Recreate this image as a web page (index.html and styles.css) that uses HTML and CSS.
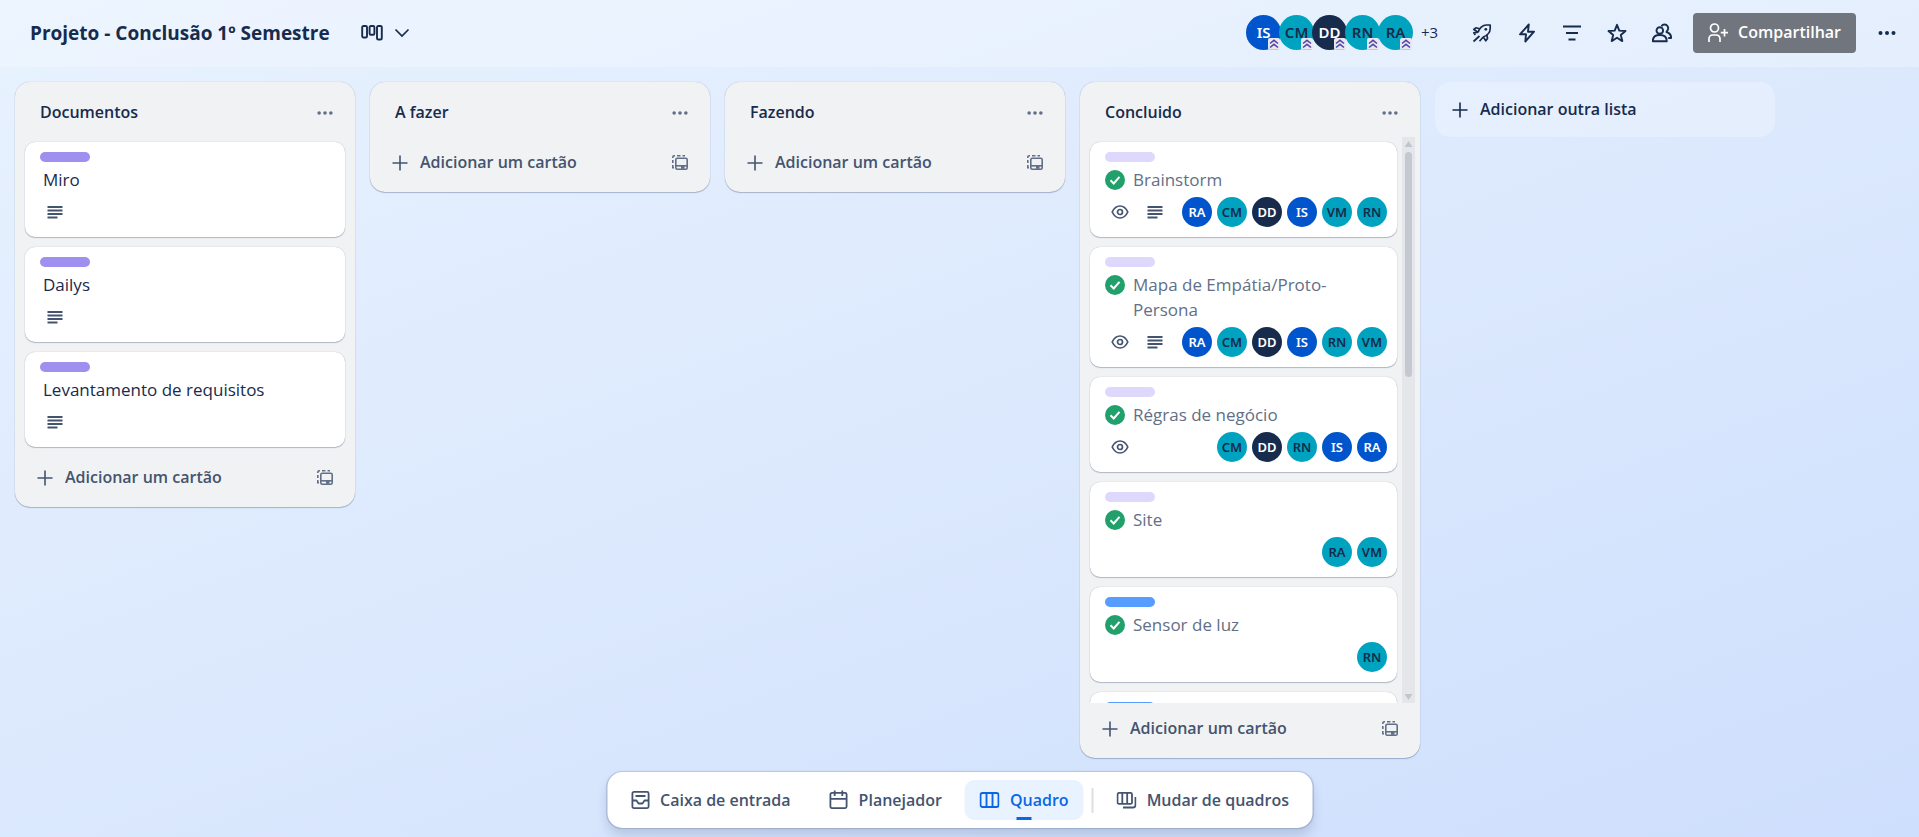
FILE: index.html
```html
<!DOCTYPE html>
<html lang="pt-BR">
<head>
<meta charset="utf-8">
<title>Projeto - Conclusão 1º Semestre</title>
<link rel="stylesheet" href="styles.css">
</head>
<body>
<svg class="sprite" aria-hidden="true">
  <symbol id="plus" viewBox="0 0 20 20"><path d="M10 2.500v15M2.500 10h15" fill="none" stroke="currentColor" stroke-width="1.600"/></symbol>
  <symbol id="dots" viewBox="0 0 20 20"><g fill="currentColor"><circle cx="3.500" cy="10" r="2"/><circle cx="10" cy="10" r="2"/><circle cx="16.500" cy="10" r="2"/></g></symbol>
  <symbol id="lines" viewBox="0 0 20 20"><path d="M2.500 5h15M2.500 8.500h15M2.500 12h15M2.500 15.500h10" fill="none" stroke="currentColor" stroke-width="1.900"/></symbol>
  <symbol id="eye" viewBox="0 0 20 20"><g fill="none" stroke="currentColor" stroke-width="1.700"><path d="M2.200 10C4.200 5.800 7 4 10 4S15.800 5.800 17.800 10C15.800 14.200 13 16 10 16S4.200 14.200 2.200 10Z"/><circle cx="10" cy="10" r="2.500"/></g></symbol>
  <symbol id="check" viewBox="0 0 20 20"><circle cx="10" cy="10" r="10" fill="#22a06b"/><path d="M5.500 10.300l3.200 3.200 5.800-6.700" fill="none" stroke="#fff" stroke-width="2"/></symbol>
  <symbol id="template" viewBox="0 0 20 20"><g fill="none" stroke="currentColor" stroke-width="1.600"><rect x="5.800" y="5.300" width="11.400" height="10.900" rx="1.500"/><path d="M5.500 12.800h12"/><path d="M2.800 5V4.300a1.500 1.500 0 0 1 1.500-1.500H5M7 2.800h3.500M12.500 2.800H15M2.800 7v3M2.800 12v2.800H4"/></g><path d="M11 12.500h3.500v3.300H11z" fill="currentColor"/></symbol>
  <symbol id="chevrons" viewBox="0 0 12 12"><rect width="12" height="12" rx="2" fill="#e8e8ee"/><path d="M1 11.500l1-.5h8l1 .5z" fill="#aaa"/><path d="M2 5.500L6 2.300l4 3.200M2 9.500l4-3.200 4 3.200" fill="none" stroke="#5243aa" stroke-width="1.500"/></symbol>
</svg>

<header class="topbar">
  <h1 class="board-name">Projeto - Conclusão 1º Semestre</h1>
  <button class="view-switch" aria-label="Visualizações">
    <svg width="22" height="20" viewBox="0 0 22 20"><g fill="none" stroke="currentColor" stroke-width="1.900"><rect x="1.200" y="3" width="4.800" height="11.500" rx="1.300"/><rect x="8.600" y="3" width="4.800" height="8.800" rx="1.300"/><rect x="16" y="3" width="4.800" height="13.500" rx="1.300"/></g></svg>
    <svg width="16" height="20" viewBox="0 0 16 20"><path d="M1.500 6.500l6.500 6.500 6.500-6.500" fill="none" stroke="currentColor" stroke-width="1.700"/></svg>
  </button>
  <div class="topbar-right">
    <ul class="members">
      <li class="avatar avatar-lg blue">IS<svg class="admin"><use href="#chevrons"/></svg></li>
      <li class="avatar avatar-lg teal">CM<svg class="admin"><use href="#chevrons"/></svg></li>
      <li class="avatar avatar-lg navy">DD<svg class="admin"><use href="#chevrons"/></svg></li>
      <li class="avatar avatar-lg teal">RN<svg class="admin"><use href="#chevrons"/></svg></li>
      <li class="avatar avatar-lg teal">RA<svg class="admin"><use href="#chevrons"/></svg></li>
    </ul>
    <button class="more-members">+3</button>
    <div class="tools">
      <button class="tool" aria-label="Power-Ups"><svg class="icon" viewBox="0 0 20 20"><g fill="none" stroke="currentColor" stroke-width="1.700" stroke-linejoin="round"><path d="M6.200 9.200C7.200 5.500 10.500 2 14.500 2h3.700v3.500c0 4-3.200 7.300-7 8.500"/><path d="M7.800 5.800L3.800 4.800 1.800 6.500l4.400 2.700M14.800 11.500l.7 4-1.700 2.300-2.600-3.800"/><path d="M6.200 9.200l-4.400.6 1.500 2.200M7.500 13l-6 5.500M11.200 14l-3.700 4.200"/></g><circle cx="13.800" cy="6.300" r="1.400" fill="currentColor"/></svg></button>
      <button class="tool" aria-label="Automação"><svg class="icon" viewBox="0 0 20 20"><path d="M11.800 1.500L3 11.300h6L8.300 18.500 17 8.700h-6z" fill="none" stroke="currentColor" stroke-width="1.900" stroke-linejoin="round"/></svg></button>
      <button class="tool" aria-label="Filtros"><svg class="icon" viewBox="0 0 20 20"><path d="M1 3.500h18M4 10h12M6.500 16.500h7" fill="none" stroke="currentColor" stroke-width="1.900"/></svg></button>
      <button class="tool" aria-label="Favoritar"><svg class="icon" viewBox="0 0 20 20"><path d="M10 1.800l2.300 5.800 6.200.4-4.700 4 1.500 6.100L10 14.800l-5.300 3.300L6.200 12 1.500 8l6.200-.4z" fill="none" stroke="currentColor" stroke-width="1.900" stroke-linejoin="round"/></svg></button>
      <button class="tool" aria-label="Visibilidade"><svg class="icon" viewBox="0 0 20 20"><g fill="none" stroke="currentColor" stroke-width="1.900" stroke-linejoin="round"><circle cx="7.800" cy="7.500" r="3.300"/><path d="M.8 18.200c0-4 2.500-6.200 7-6.200s7 2.200 7 6.200z"/><path d="M9.500 3.200C10.300 1.800 11.300 1.500 12.500 1.500a3.600 3.600 0 0 1 3.300 5.200L14.500 9c3 1 4.700 3 4.700 6h-3"/></g></svg></button>
    </div>
    <button class="share"><svg class="icon" viewBox="0 0 20 20"><g fill="none" stroke="currentColor" stroke-width="1.700"><circle cx="6.500" cy="5" r="4"/><path d="M1 19v-3.500a3.500 3.500 0 0 1 3.500-3.500h4a3.500 3.500 0 0 1 3.500 3.500V19M16.500 6v7.500M12.800 9.700h7.200"/></g></svg><span>Compartilhar</span></button>
    <button class="tool" aria-label="Menu"><svg class="icon" viewBox="0 0 20 20"><use href="#dots"/></svg></button>
  </div>
</header>

<main class="board">
  <section class="list">
    <header class="list-head"><h2>Documentos</h2><button class="list-menu" aria-label="Ações da lista"><svg><use href="#dots"/></svg></button></header>
    <div class="list-body"><ol class="cards">
      <li class="card"><span class="label purple"></span><h3>Miro</h3><div class="badges"><svg><use href="#lines"/></svg></div></li>
      <li class="card"><span class="label purple"></span><h3>Dailys</h3><div class="badges"><svg><use href="#lines"/></svg></div></li>
      <li class="card"><span class="label purple"></span><h3>Levantamento de requisitos</h3><div class="badges"><svg><use href="#lines"/></svg></div></li>
    </ol></div>
    <footer class="list-foot"><button class="add-card"><svg><use href="#plus"/></svg>Adicionar um cartão</button><button class="from-template" aria-label="Criar de modelo"><svg><use href="#template"/></svg></button></footer>
  </section>

  <section class="list">
    <header class="list-head"><h2>A fazer</h2><button class="list-menu" aria-label="Ações da lista"><svg><use href="#dots"/></svg></button></header>
    <footer class="list-foot"><button class="add-card"><svg><use href="#plus"/></svg>Adicionar um cartão</button><button class="from-template" aria-label="Criar de modelo"><svg><use href="#template"/></svg></button></footer>
  </section>

  <section class="list">
    <header class="list-head"><h2>Fazendo</h2><button class="list-menu" aria-label="Ações da lista"><svg><use href="#dots"/></svg></button></header>
    <footer class="list-foot"><button class="add-card"><svg><use href="#plus"/></svg>Adicionar um cartão</button><button class="from-template" aria-label="Criar de modelo"><svg><use href="#template"/></svg></button></footer>
  </section>

  <section class="list">
    <header class="list-head"><h2>Concluido</h2><button class="list-menu" aria-label="Ações da lista"><svg><use href="#dots"/></svg></button></header>
    <div class="list-body scrolling">
      <ol class="cards">
        <li class="card done"><span class="label lilac"></span><div class="card-title"><svg><use href="#check"/></svg><h3>Brainstorm</h3></div>
          <div class="badges"><svg><use href="#eye"/></svg><svg><use href="#lines"/></svg><ul class="people"><li class="avatar blue">RA</li><li class="avatar teal">CM</li><li class="avatar navy">DD</li><li class="avatar blue">IS</li><li class="avatar teal">VM</li><li class="avatar teal">RN</li></ul></div></li>
        <li class="card done"><span class="label lilac"></span><div class="card-title"><svg><use href="#check"/></svg><h3>Mapa de Empátia/Proto-Persona</h3></div>
          <div class="badges"><svg><use href="#eye"/></svg><svg><use href="#lines"/></svg><ul class="people"><li class="avatar blue">RA</li><li class="avatar teal">CM</li><li class="avatar navy">DD</li><li class="avatar blue">IS</li><li class="avatar teal">RN</li><li class="avatar teal">VM</li></ul></div></li>
        <li class="card done"><span class="label lilac"></span><div class="card-title"><svg><use href="#check"/></svg><h3>Régras de negócio</h3></div>
          <div class="badges"><svg><use href="#eye"/></svg><ul class="people"><li class="avatar teal">CM</li><li class="avatar navy">DD</li><li class="avatar teal">RN</li><li class="avatar blue">IS</li><li class="avatar blue">RA</li></ul></div></li>
        <li class="card done"><span class="label lilac"></span><div class="card-title"><svg><use href="#check"/></svg><h3>Site</h3></div>
          <div class="badges"><ul class="people"><li class="avatar teal">RA</li><li class="avatar teal">VM</li></ul></div></li>
        <li class="card done"><span class="label sky"></span><div class="card-title"><svg><use href="#check"/></svg><h3>Sensor de luz</h3></div>
          <div class="badges"><ul class="people"><li class="avatar teal">RN</li></ul></div></li>
        <li class="card done"><span class="label sky"></span><div class="badges"></div></li>
      </ol>
      <div class="scrollbar" aria-hidden="true">
        <svg class="arrow" viewBox="0 0 13 15"><path d="M6.500 4L10.500 10h-8z"/></svg>
        <div class="track"><div class="thumb"></div></div>
        <svg class="arrow" viewBox="0 0 13 15"><path d="M6.500 12L10.500 6h-8z"/></svg>
      </div>
    </div>
    <footer class="list-foot"><button class="add-card"><svg><use href="#plus"/></svg>Adicionar um cartão</button><button class="from-template" aria-label="Criar de modelo"><svg><use href="#template"/></svg></button></footer>
  </section>

  <button class="add-list"><svg><use href="#plus"/></svg>Adicionar outra lista</button>
</main>

<nav class="dock">
  <button class="dock-item"><svg viewBox="0 0 20 20"><g fill="none" stroke="currentColor" stroke-width="1.800"><rect x="1.900" y="1.900" width="16.200" height="16.200" rx="1.500"/><path d="M5 6h10M2 10.500h4l2 3h4l2-3h4" stroke-linejoin="round"/></g></svg>Caixa de entrada</button>
  <button class="dock-item"><svg viewBox="0 0 20 20"><g fill="none" stroke="currentColor" stroke-width="1.800"><rect x="1.900" y="2.900" width="16.200" height="15.200" rx="1.500"/><path d="M2 8.800h16M6.200.500v5.500M13.800.500v5.500"/></g></svg>Planejador</button>
  <button class="dock-item active"><svg viewBox="0 0 20 20"><g fill="none" stroke="currentColor" stroke-width="1.900"><rect x="1" y="3" width="18" height="14" rx="2"/><path d="M7 3v14M13 3v14"/></g></svg>Quadro</button>
  <span class="divider"></span>
  <button class="dock-item"><svg viewBox="0 0 20 20"><g fill="none" stroke="currentColor" stroke-width="1.800"><rect x="1" y="2.900" width="14.500" height="11" rx="1.500"/><path d="M5.800 3v11M10.700 3v11M19 7v8a2.500 2.500 0 0 1-2.500 2.500H6.500"/></g></svg>Mudar de quadros</button>
</nav>
</body>
</html>
```
FILE: styles.css
```css
* { box-sizing: border-box; }

body {
  margin: 0;
  height: 100vh;
  display: flex;
  flex-direction: column;
  overflow: hidden;
  position: relative;
  background: linear-gradient(160deg, #e8f2ff 0%, #dce9fd 50%, #cedffd 100%);
  color: #172b4d;
  font-family: "Open Sans", "Noto Sans", sans-serif;
  font-size: 16px;
  line-height: 25px;
}

h1, h2, h3, ul, ol { margin: 0; padding: 0; list-style: none; }

button {
  padding: 0;
  border: 0;
  background: none;
  color: inherit;
  font: inherit;
}

svg { display: block; flex: none; }
.sprite { position: absolute; width: 0; height: 0; }

.topbar {
  display: flex;
  align-items: center;
  height: 67px;
  flex: none;
  padding: 0 12px 2px 30px;
  background: rgba(255, 255, 255, 0.24);
}
.board-name { font-size: 19px; font-weight: 700; line-height: 30px; }
.view-switch { display: flex; gap: 11px; margin-left: 31px; }
.topbar-right { display: flex; align-items: center; margin-left: auto; }
.members { display: flex; padding-right: 2px; }
.more-members { width: 33px; margin-right: 16px; font-size: 15px; }
.tools { display: flex; gap: 5px; margin-right: 11px; }
.tool { width: 40px; height: 40px; display: grid; place-items: center; }
.icon { width: 20px; height: 20px; }
.share {
  display: flex;
  align-items: center;
  gap: 10px;
  height: 40px;
  margin-right: 11px;
  padding: 0 15px;
  border-radius: 4px;
  background: #71757d;
  color: #fff;
  font-weight: 600;
}

.avatar {
  width: 30px;
  height: 30px;
  display: grid;
  place-items: center;
  border-radius: 50%;
  font-family: "Noto Sans", sans-serif;
  font-size: 13px;
  font-weight: 600;
}
.avatar-lg {
  position: relative;
  width: 35px;
  height: 35px;
  margin-right: -2px;
  font-size: 15px;
}
.admin { position: absolute; right: 1px; bottom: 0; width: 12px; height: 12px; }
.blue { background: #0055cc; color: #fff; }
.navy { background: #172b4d; color: #fff; }
.teal { background: #00a3bf; color: #172b4d; }

.board {
  flex: 1;
  min-height: 0;
  display: flex;
  align-items: flex-start;
  gap: 15px;
  padding: 15px 15px 79px;
}
.list {
  display: flex;
  flex-direction: column;
  width: 340px;
  flex: none;
  max-height: 100%;
  border-radius: 15px;
  background: #f1f2f4;
  box-shadow: 0 1px 1px #091e4240, 0 0 1px #091e424f;
}
.list-head, .list-foot {
  display: flex;
  align-items: center;
  justify-content: space-between;
  height: 55px;
  flex: none;
  padding: 6px 20px 0 25px;
}
.list-head h2 { font-size: 16px; font-weight: 600; }
.list-head svg, .list-foot svg, .badges svg, .add-list svg { width: 20px; height: 20px; }
.list-menu, .from-template { color: #626f86; }
.list-menu svg { padding: 1px; }
.list-foot { padding: 0 20px 4px; }
.add-card { display: flex; align-items: center; gap: 10px; color: #44546f; font-weight: 600; }

.list-body { display: flex; min-height: 0; padding: 0 10px; }
.list-body.scrolling { overflow: hidden; padding-right: 5px; }
.cards {
  flex: 1;
  display: flex;
  flex-direction: column;
  gap: 10px;
  padding: 5px 0;
}
.card {
  display: flex;
  flex-direction: column;
  gap: 5px;
  flex: none;
  padding: 10px;
  border-radius: 10px;
  background: #fff;
  box-shadow: 0 1px 1px #091e4240, 0 0 1px #091e424f;
}
.card h3 { padding: 0 8px; font-size: 17px; font-weight: 400; }
.label { width: 50px; height: 10px; margin-left: 5px; border-radius: 5px; }
.purple { background: #9f8fef; }
.lilac { background: #dfd8fd; }
.sky { background: #579dff; }
.card-title { display: flex; gap: 8px; padding: 0 5px; }
.card-title svg { width: 20px; height: 20px; margin-top: 3px; }
.card-title h3 { padding: 0; color: #626f86; }
.badges { display: flex; align-items: center; gap: 15px; height: 30px; padding-left: 10px; color: #44546f; }
.people { display: flex; gap: 5px; margin-left: auto; }

.scrollbar { display: flex; flex-direction: column; width: 13px; margin-left: 5px; background: #e4e6ea; }
.arrow { width: 13px; height: 15px; fill: #c1c5cd; }
.track { flex: 1; min-height: 0; padding: 0 3px; }
.thumb { height: 42%; border-radius: 4px; background: #c4c8d0; }

.add-list {
  display: flex;
  align-items: center;
  gap: 10px;
  width: 340px;
  height: 55px;
  padding: 0 15px;
  border-radius: 15px;
  background: rgba(255, 255, 255, 0.24);
  font-weight: 600;
}

.dock {
  position: absolute;
  bottom: 9px;
  left: 50%;
  transform: translateX(-50%);
  display: flex;
  align-items: center;
  gap: 8px;
  padding: 8px;
  border-radius: 15px;
  background: #fff;
  box-shadow: 0 8px 12px #091e4226, 0 0 1px 1px #091e4226;
}
.dock-item {
  position: relative;
  display: flex;
  align-items: center;
  gap: 10px;
  height: 40px;
  padding: 0 15px;
  border-radius: 10px;
  color: #44546f;
  font-weight: 600;
  white-space: nowrap;
}
.dock-item svg { width: 20px; height: 20px; }
.dock-item.active { background: #e9f2ff; color: #0c66e4; }
.dock-item.active::after {
  content: "";
  position: absolute;
  bottom: 0;
  left: 50%;
  width: 15px;
  height: 3px;
  margin-left: -8px;
  background: #0c66e4;
}
.divider { width: 2px; height: 25px; background: #dcdfe4; }
```
